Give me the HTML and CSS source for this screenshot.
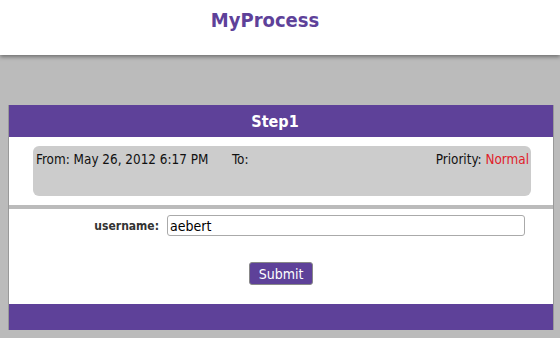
FILE: index.html
```html
<!DOCTYPE html>
<html>
<head>
<meta charset="utf-8">
<link rel="stylesheet" href="styles.css">
</head>
<body>
<header class="top">
  <h1 class="title">MyProcess</h1>
</header>
<main class="page">
  <section class="panel">
    <div class="panel-head">Step1</div>
    <div class="panel-info">
      <div class="info-box">
        <span class="from">From: May 26, 2012 6:17 PM</span>
        <span class="to">To:</span>
        <span class="priority">Priority: <span class="prio-val">Normal</span></span>
      </div>
    </div>
    <div class="panel-form">
      <div class="form-row">
        <label class="label" for="u">username:</label>
        <input class="input" id="u" type="text" value="aebert">
      </div>
      <div class="actions">
        <button class="btn">Submit</button>
      </div>
    </div>
    <div class="panel-foot"></div>
  </section>
</main>
</body>
</html>
```
FILE: styles.css
```css
* { box-sizing: border-box; }
html, body { margin: 0; padding: 0; }
body {
  background: #bbbbbb;
  font-family: "DejaVu Sans Condensed", "DejaVu Sans", sans-serif;
  height: 338px;
  overflow: hidden;
}
.top {
  background: #ffffff;
  height: 55px;
  box-shadow: 0 2px 4px rgba(0,0,0,0.4);
  position: relative;
  padding-right: 30px;
}
.title {
  margin: 0;
  text-align: center;
  color: #5e4199;
  font-size: 20px;
  font-weight: bold;
  padding-top: 8px;
  line-height: 24px;
}
.page {
  padding: 50px 6px 0 8px;
}
.panel {
  border-left: 1px solid #999;
  border-right: 1px solid #999;
  background: #bbbbbb;
}
.panel-head {
  background: #5e4199;
  color: #fff;
  font-weight: bold;
  font-size: 16px;
  text-align: center;
  height: 32px;
  line-height: 33px;
  padding-right: 12px;
}
.panel-info {
  background: #fff;
  padding: 9px 22px 9px 24px;
}
.info-box {
  background: #cccccc;
  border-radius: 6px;
  height: 50px;
  display: flex;
  align-items: flex-start;
  padding: 6px 2px 0 3px;
  font-size: 13.4px;
  color: #111;
}
.from { width: 196px; }
.to { flex: 1; }
.prio-val { color: #e0202a; }
.panel-form {
  background: #fff;
  margin-top: 4px;
  height: 95px;
  padding-top: 6px;
}
.form-row {
  display: flex;
  align-items: center;
}
.label {
  width: 150px;
  text-align: right;
  font-weight: bold;
  font-size: 12px;
  color: #333;
  margin-right: 8px;
}
.input {
  width: 358px;
  height: 21px;
  border: 1px solid #aaa;
  border-radius: 3px;
  font-family: inherit;
  font-size: 14px;
  padding: 0 2px;
  color: #000;
}
.actions {
  text-align: center;
  margin-top: 26px;
}
.btn {
  background: #5e4199;
  color: #fff;
  border: 1px solid #888;
  border-radius: 3px;
  font-family: inherit;
  font-size: 14px;
  height: 23px;
  padding: 0 9px;
}
.panel-foot {
  background: #5e4199;
  height: 26px;
}
```
